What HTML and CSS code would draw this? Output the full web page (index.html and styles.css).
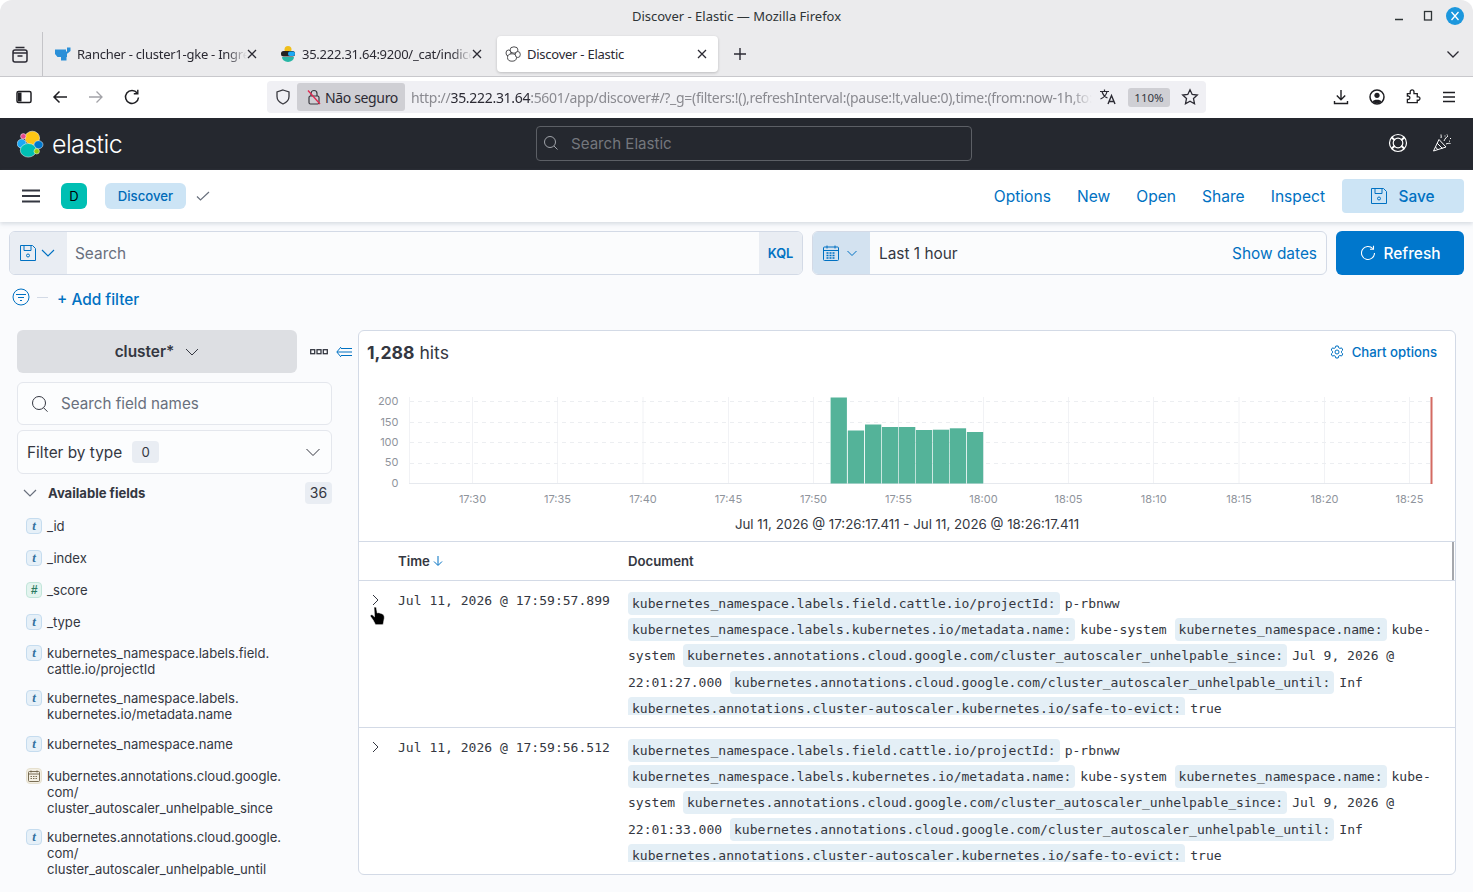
FILE: index.html
```html
<!DOCTYPE html>
<html lang="pt">
<head>
    <meta charset="UTF-8">
    <title>Discover - Elastic</title>
    <link rel="stylesheet" href="styles.css">
</head>
<body>
<div class="window">
    <!-- firefox chrome -->
    <div class="titlebar">
        <span class="title">Discover - Elastic — Mozilla Firefox</span>
        <div class="winctl">
            <svg class="win-min" width="12" height="12" viewBox="0 0 12 12"><path d="M2 9.500h8" stroke="#2e3436" stroke-width="1.400"/></svg>
            <svg width="12" height="12" viewBox="0 0 12 12"><rect x="2.500" y="1.500" width="7" height="8.500" fill="none" stroke="#2e3436" stroke-width="1.300"/></svg>
            <span class="close"><svg width="18" height="18" viewBox="0 0 18 18"><path d="M5.500 5l7 8M12.500 5l-7 8" stroke="#fff" stroke-width="1.300"/></svg></span>
        </div>
    </div>
    <div class="tabbar">
        <div class="tabview">
            <svg width="18" height="18" viewBox="0 0 18 18" fill="none" stroke="#2b2a33" stroke-width="1.500"><rect x="2" y="4" width="14" height="12" rx="2"/><path d="M4.500 1.500h9M6.500 10h5"/><path d="M2 7h14"/></svg>
        </div>
        <div class="tab">
            <svg class="fav" width="16" height="16" viewBox="0 0 16 16"><path d="M0 3.500h11v2h1v-4h3.500V5l-3 2.500H12V11h-.5v3.500H6V11H2.500L0 8z" fill="#2a8fd8"/></svg>
            <span class="tab-text">Rancher - cluster1-gke - Ingress</span>
            <svg class="tab-x" width="10" height="10" viewBox="0 0 10 10"><path d="M1 1l8 8M9 1l-8 8" stroke="#2b2a33" stroke-width="1.300"/></svg>
        </div>
        <div class="tab">
            <svg class="fav" width="16" height="16" viewBox="0 0 16 16"><circle cx="8" cy="3.500" r="3.500" fill="#f0bf1a"/><rect x="1" y="5" width="14" height="5.500" rx="2.500" fill="#222"/><rect x="8" y="5.500" width="7" height="4.500" rx="2" fill="#1ba9f5"/><path d="M2 11h12a6 5 0 0 1-12 0z" fill="#26b6a5"/></svg>
            <span class="tab-text">35.222.31.64:9200/_cat/indices</span>
            <svg class="tab-x" width="10" height="10" viewBox="0 0 10 10"><path d="M1 1l8 8M9 1l-8 8" stroke="#2b2a33" stroke-width="1.300"/></svg>
        </div>
        <div class="tab tab-active">
            <svg class="fav" width="16" height="16" viewBox="0 0 16 16" fill="#fff" stroke="#3c3c40" stroke-width=".9"><ellipse cx="9" cy="4" rx="4" ry="3.200"/><ellipse cx="3.500" cy="7" rx="2.500" ry="3"/><ellipse cx="7" cy="11.500" rx="4.500" ry="3.700"/><ellipse cx="12.800" cy="8.500" rx="2.500" ry="3"/></svg>
            <span class="tab-text">Discover - Elastic</span>
            <svg class="tab-x" width="10" height="10" viewBox="0 0 10 10"><path d="M1 1l8 8M9 1l-8 8" stroke="#2b2a33" stroke-width="1.300"/></svg>
        </div>
        <svg class="newtab" width="14" height="14" viewBox="0 0 14 14"><path d="M7 1v12M1 7h12" stroke="#2b2a33" stroke-width="1.400"/></svg>
        <svg class="alltabs" width="14" height="14" viewBox="0 0 14 14" fill="none"><path d="M1.500 4.500L7 10l5.500-5.500" stroke="#2b2a33" stroke-width="1.300"/></svg>
    </div>
    <div class="navbar">
        <div class="nav-left">
            <svg width="16" height="16" viewBox="0 0 16 16" fill="none" stroke="#1f1f23" stroke-width="1.500"><rect x="1" y="2.500" width="14" height="11" rx="1.500"/><rect x="2" y="3.500" width="3.500" height="9" fill="#1f1f23" stroke="none"/></svg>
            <svg width="16" height="16" viewBox="0 0 16 16" fill="none" stroke="#1f1f23" stroke-width="1.500"><path d="M15 8H2M7.500 2.500L2 8l5.500 5.500"/></svg>
            <svg width="16" height="16" viewBox="0 0 16 16" fill="none" stroke="#a3a3a8" stroke-width="1.300"><path d="M1 8h13M8.500 2.500L14 8l-5.500 5.500"/></svg>
            <svg width="16" height="16" viewBox="0 0 16 16" fill="none" stroke="#1f1f23" stroke-width="1.500"><path d="M13.200 4A6.500 6.500 0 1 0 14.500 8.500"/><path d="M13.800 .8v4h-4" stroke-width="1.400"/></svg>
        </div>
        <div class="urlbar">
            <svg class="shield" width="16" height="16" viewBox="0 0 16 16" fill="none" stroke="#3a3a40" stroke-width="1.300"><path d="M8 1l6 2v4.500c0 3.500-2.500 6-6 7.500-3.500-1.500-6-4-6-7.500V3z"/></svg>
            <span class="notsafe">
                <svg width="16" height="16" viewBox="0 0 16 16" fill="none" stroke="#3a3a40" stroke-width="1.200"><rect x="3" y="7" width="10" height="8" rx="1.500"/><path d="M5 7V4.500a3 3 0 0 1 6 0V7"/><path d="M2 1.500l12 13.500" stroke="#e22850" stroke-width="1.300"/></svg>
                Não seguro
            </span>
            <span class="url">http://<b>35.222.31.64</b>:5601/app/discover#/?_g=(filters:!(),refreshInterval:(pause:!t,value:0),time:(from:now-1h,to:now))</span>
            <svg class="translate" width="18" height="18" viewBox="0 0 18 18" fill="none" stroke="#2b2a33" stroke-width="1.200"><path d="M1 3.500h9M5.500 1.500v2M8 3.500c-.7 3.500-3 6-6.500 7.500M3 3.500c.8 3 3 5.500 5.500 6.500"/><path d="M9 16l3.500-8.500L16 16M10.200 13.500h4.600" stroke-width="1.400"/></svg>
            <span class="zoomchip">110%</span>
            <svg class="star" width="18" height="18" viewBox="0 0 18 18" fill="none" stroke="#2b2a33" stroke-width="1.300"><path d="M9 1.800l2.200 4.700 5.100.6-3.800 3.500 1 5.100L9 13.200l-4.500 2.500 1-5.100L1.700 7.100l5.100-.6z"/></svg>
        </div>
        <div class="nav-right">
            <svg width="16" height="16" viewBox="0 0 16 16" fill="none" stroke="#1f1f23" stroke-width="1.400"><path d="M8 1v9.500M3.800 6.500L8 10.700l4.200-4.200M1.500 12v2.500h13V12"/></svg>
            <svg width="16" height="16" viewBox="0 0 16 16"><circle cx="8" cy="8" r="7" fill="none" stroke="#1f1f23" stroke-width="1.500"/><circle cx="8" cy="6.300" r="2.600" fill="#1f1f23"/><path d="M3.500 12.500c1-2.500 8-2.500 9 0a6 6 0 0 1-9 0z" fill="#1f1f23"/></svg>
            <svg width="16" height="16" viewBox="0 0 16 16" fill="none" stroke="#1f1f23" stroke-width="1.400"><path d="M2 5.500h3V3.500a2 2 0 0 1 4 0v2h3.500V9h1.500a1.800 1.800 0 0 1 0 3.500h-1.500v2.500H2v-3.500h1.300a1.800 1.800 0 0 0 0-3.500H2z" transform="translate(.5 -.5) scale(.94)"/></svg>
            <svg width="16" height="16" viewBox="0 0 16 16" fill="none" stroke="#1f1f23" stroke-width="1.400"><path d="M2 3.500h12M2 8h12M2 12.500h12"/></svg>
        </div>
    </div>

    <!-- kibana -->
    <header class="k-header">
        <div class="k-logo">
            <svg width="28" height="28" viewBox="0 0 28 28" stroke="#fff" stroke-width=".5"><ellipse cx="15.300" cy="8" rx="7.300" ry="6.800" fill="#fec514"/><circle cx="6.300" cy="6.300" r="2.700" fill="#e8478b"/><circle cx="4.700" cy="13.700" r="4.500" fill="#1ba9f5"/><ellipse cx="21.500" cy="14.700" rx="4.500" ry="4" fill="#0077cc"/><ellipse cx="11.300" cy="20.300" rx="8" ry="6.800" fill="#00bfb3"/><circle cx="19.700" cy="21.300" r="2.700" fill="#93c90e"/></svg>
            <span class="k-word">elastic</span>
        </div>
        <div class="k-search">
            <svg width="16" height="16" viewBox="0 0 16 16" fill="none" stroke="#a0a3a9" stroke-width="1"><circle cx="7" cy="7" r="5.500"/><path d="M11 11l3.500 3.500"/></svg>
            <span>Search Elastic</span>
        </div>
        <div class="k-actions">
            <svg width="20" height="20" viewBox="0 0 20 20" fill="none" stroke="#fff" stroke-width="1.200"><circle cx="10" cy="10" r="8.500"/><circle cx="10" cy="10" r="4.800"/><path d="M3.800 4.500l3 2.800M16.200 4.500l-3 2.800M3.800 15.500l3-2.800M16.200 15.500l-3-2.800" stroke-width="2"/></svg>
            <svg width="20" height="20" viewBox="0 0 20 20" fill="none" stroke="#fff" stroke-width="1"><path d="M1.500 18L7 6.500l7 7.500z"/><path d="M5 10l5.500 5.500M3.500 14l2.500 3M9 5c.5-1.500 0-2.500 0-3.500M12 8c1-2.500 2.500-4 4-5M14 11c1.500-.7 3-.8 4.500-.5M15 1.500l.5 1M18 5.500h1M13 2.500v1M17 8l1 .3"/></svg>
        </div>
    </header>
    <div class="app-bar">
        <svg class="burger" width="18" height="14" viewBox="0 0 18 14"><path d="M0 1.500h18M0 7h18M0 12.500h18" stroke="#343741" stroke-width="2"/></svg>
        <span class="space-badge">D</span>
        <span class="crumb">Discover</span>
        <svg width="14" height="14" viewBox="0 0 14 14" fill="none"><path d="M1 7.500l3.500 3.500L13 3" stroke="#69707d" stroke-width="1.200"/></svg>
        <nav class="app-menu">
            <a>Options</a><a>New</a><a>Open</a><a>Share</a><a>Inspect</a>
            <span class="save-btn">
                <svg width="16" height="16" viewBox="0 0 16 16" fill="none" stroke="#0071c2" stroke-width="1"><path d="M.5 .5h12l3 3v12H.5z"/><path d="M4 .5v5h7v-5"/><circle cx="8" cy="10.500" r="1.500"/></svg>
                Save
            </span>
        </nav>
    </div>

    <div class="content">
        <div class="query-row">
            <div class="query-box">
                <span class="saved">
                    <svg width="16" height="16" viewBox="0 0 16 16" fill="none" stroke="#0071c2" stroke-width="1"><path d="M.5 .5h12l3 3v12H.5z"/><path d="M4 .5v5h7v-5"/><circle cx="8" cy="10.500" r="1.500"/></svg>
                    <svg width="14" height="14" viewBox="0 0 14 14" fill="none"><path d="M1 4l6 6 6-6" stroke="#0071c2" stroke-width="1.100"/></svg>
                </span>
                <span class="query-input">Search</span>
                <span class="kql">KQL</span>
            </div>
            <div class="date-box">
                <span class="cal">
                    <svg width="16" height="16" viewBox="0 0 16 16" fill="none" stroke="#0071c2" stroke-width="1"><rect x=".5" y="2" width="15" height="13.500" rx="1"/><path d="M.5 5.500h15M4 .5v3M12 .5v3"/><path d="M3.500 8h9M3.500 10.500h9M3.500 13h9" stroke-width="1.300" stroke-dasharray="2 1"/></svg>
                    <svg width="10" height="10" viewBox="0 0 10 10" fill="none"><path d="M.5 3L5 7.500 9.500 3" stroke="#0071c2"/></svg>
                </span>
                <span class="date-label">Last 1 hour</span>
                <a class="show-dates">Show dates</a>
            </div>
            <span class="refresh-btn">
                <svg width="16" height="16" viewBox="0 0 16 16" fill="none" stroke="#fff" stroke-width="1.100"><path d="M12.800 3.600A6.500 6.500 0 1 0 14.500 8"/><path d="M13.500 .8v3.500H10"/></svg>
                Refresh
            </span>
        </div>
        <div class="filter-row">
            <svg width="18" height="18" viewBox="0 0 18 18" fill="none" stroke="#0071c2" stroke-width="1"><circle cx="9" cy="9" r="8"/><path d="M4 6.500h10M6 9.500h6M8 12.500h2" stroke-width="1.200"/></svg>
            <span class="filter-dash"></span>
            <a class="add-filter">+ Add filter</a>
        </div>

        <div class="main">
            <aside class="sidebar">
                <div class="index-row">
                    <span class="index-btn">cluster*
                        <svg width="14" height="14" viewBox="0 0 14 14" fill="none"><path d="M1 4l6 6 6-6" stroke="#343741" stroke-width="1"/></svg>
                    </span>
                    <svg class="dots" width="18" height="6" viewBox="0 0 18 6" fill="none" stroke="#343741" stroke-width="1.300"><rect x=".7" y=".7" width="4" height="4"/><rect x="7" y=".7" width="4" height="4"/><rect x="13.300" y=".7" width="4" height="4"/></svg>
                    <svg class="collapse" width="16" height="12" viewBox="0 0 16 12" fill="none" stroke="#0071c2" stroke-width="1"><path d="M5 1L.8 6 5 11M1 6h15M5 2.500h11M5 9.500h11"/></svg>
                </div>
                <div class="field-search">
                    <svg width="18" height="18" viewBox="0 0 18 18" fill="none" stroke="#343741" stroke-width="1"><circle cx="8" cy="8" r="6.500"/><path d="M12.500 12.700l4 4"/></svg>
                    <span>Search field names</span>
                </div>
                <div class="field-filter">
                    <span>Filter by type</span>
                    <span class="count">0</span>
                    <svg width="14" height="14" viewBox="0 0 14 14" fill="none"><path d="M.5 4l6.500 6.500L13.500 4" stroke="#343741" stroke-width="1"/></svg>
                </div>
                <div class="avail">
                    <svg width="14" height="14" viewBox="0 0 14 14" fill="none"><path d="M1 4l6 6 6-6" stroke="#69707d" stroke-width="1.200"/></svg>
                    <span>Available fields</span>
                    <span class="avail-count">36</span>
                </div>
                <ul class="fields">
                    <li><i class="ftype">t</i><span>_id</span></li>
                    <li><i class="ftype">t</i><span>_index</span></li>
                    <li><i class="ftype ftype-num">#</i><span>_score</span></li>
                    <li><i class="ftype">t</i><span>_type</span></li>
                    <li class="multi"><i class="ftype">t</i><span>kubernetes_namespace.labels.field.<br>cattle.io/projectId</span></li>
                    <li class="multi"><i class="ftype">t</i><span>kubernetes_namespace.labels.<br>kubernetes.io/metadata.name</span></li>
                    <li><i class="ftype">t</i><span>kubernetes_namespace.name</span></li>
                    <li class="multi long"><i class="ftype ftype-date"><svg width="12" height="12" viewBox="0 0 12 12" fill="none" stroke="#6b5f45" stroke-width=".9"><rect x=".5" y="1.500" width="11" height="10" rx="1"/><path d="M.5 4h11M3 .5v2M9 .5v2"/><path d="M2.500 6.500h7M2.500 8.500h7" stroke-dasharray="1.500 1"/></svg></i><span>kubernetes.annotations.cloud.google.<br>com/<br>cluster_autoscaler_unhelpable_since</span></li>
                    <li class="multi long"><i class="ftype">t</i><span>kubernetes.annotations.cloud.google.<br>com/<br>cluster_autoscaler_unhelpable_until</span></li>
                </ul>
            </aside>

            <section class="panel">
                <div class="hits-row">
                    <span class="hits"><b>1,288</b> hits</span>
                    <a class="chart-opts">
                        <svg width="14" height="14" viewBox="0 0 14 14" fill="none" stroke="#0071c2" stroke-width="1"><path d="M5.800 1h2.400l.4 1.700 1.300.7 1.700-.5 1.200 2.100-1.300 1.200v1.500l1.300 1.200-1.200 2.100-1.700-.5-1.300.7L8.200 13H5.800l-.4-1.700-1.300-.7-1.700.5L1.200 9l1.300-1.200V6.300L1.200 5l1.200-2.100 1.700.5 1.300-.7z"/><circle cx="7" cy="7" r="2"/></svg>
                        Chart options
                    </a>
                </div>
                <svg class="chart" width="1096" height="120" viewBox="359 390 1096 120">
                    <g stroke="#f1f2f5" stroke-width="1">
                        <path d="M409.500 397v87M472.500 397v87M557.500 397v87M643 397v87M728.500 397v87M813.500 397v87M898.500 397v87M983.500 397v87M1068.500 397v87M1153.500 397v87M1239 397v87M1324.500 397v87M1409.500 397v87"/>
                    </g>
                    <g stroke="#eceef1" stroke-width="1" stroke-dasharray="4 4">
                        <path d="M410 401.500h1020M410 422.500h1020M410 442.500h1020M410 463.500h1020"/>
                    </g>
                    <path d="M409 483.500h1022" stroke="#e6e9ee"/>
                    <g fill="#54b399">
                        <rect x="830.600" y="397.500" width="16.300" height="86"/>
                        <rect x="847.800" y="430.500" width="16.300" height="53"/>
                        <rect x="865" y="424.500" width="16.300" height="59"/>
                        <rect x="882" y="427" width="16.300" height="56.500"/>
                        <rect x="899" y="427" width="16.300" height="56.500"/>
                        <rect x="915.900" y="430" width="16.300" height="53.500"/>
                        <rect x="932.900" y="429.700" width="16.300" height="53.800"/>
                        <rect x="949.800" y="428.300" width="16.300" height="55.200"/>
                        <rect x="966.900" y="432" width="16.300" height="51.500"/>
                    </g>
                    <rect x="1430.500" y="397" width="2" height="87" fill="#d36a62"/>
                    <g class="axis-y" text-anchor="end">
                        <text x="398.500" y="405">200</text><text x="398.500" y="426">150</text><text x="398.500" y="446">100</text><text x="398.500" y="466">50</text><text x="398.500" y="487">0</text>
                    </g>
                    <g class="axis-x" text-anchor="middle">
                        <text x="472.500" y="503">17:30</text><text x="557.500" y="503">17:35</text><text x="643" y="503">17:40</text><text x="728.500" y="503">17:45</text><text x="813.500" y="503">17:50</text><text x="898.500" y="503">17:55</text><text x="983.500" y="503">18:00</text><text x="1068.500" y="503">18:05</text><text x="1153.800" y="503">18:10</text><text x="1239" y="503">18:15</text><text x="1324.500" y="503">18:20</text><text x="1409.500" y="503">18:25</text>
                    </g>
                </svg>
                <div class="range">Jul 11, 2026 @ 17:26:17.411 - Jul 11, 2026 @ 18:26:17.411</div>
                <div class="t-head">
                    <span class="th-time">Time
                        <svg width="10" height="10" viewBox="0 0 10 10" fill="none"><path d="M5 0v9M1 5.500L5 9.500l4-4" stroke="#0071c2" stroke-width="1"/></svg>
                    </span>
                    <span class="th-doc">Document</span>
                    <span class="thumb"></span>
                </div>
                <div class="t-row">
                    <svg class="expand" width="8" height="12" viewBox="0 0 8 12" fill="none"><path d="M1 1l5 5-5 5" stroke="#343741" stroke-width="1"/></svg>
                    <svg class="hand" width="20" height="22" viewBox="0 0 20 22"><path d="M6 1.500c1-.8 2.200-.3 2.500 1l.8 4.500 1-.3 1.500.3 1.500.5 1.500.7c1.500.8 1.600 2.500 1.500 4l-.8 4.500-.5 2H7.500L5 14 2.500 10.500c-.8-1.200.8-2.300 2-1.500l2 1.800z" fill="#000" stroke="#fff" stroke-width=".6"/></svg>
                    <span class="t-time">Jul 11, 2026 @ 17:59:57.899</span>
                    <div class="doc">
                        <span class="k">kubernetes_namespace.labels.field.cattle.io/projectId:</span><span>p-rbnww</span>
                        <span class="k">kubernetes_namespace.labels.kubernetes.io/metadata.name:</span><span>kube-system</span>
                        <span class="k">kubernetes_namespace.name:</span><span>kube-system</span>
                        <span class="k">kubernetes.annotations.cloud.google.com/cluster_autoscaler_unhelpable_since:</span><span>Jul 9, 2026 @ 22:01:27.000</span>
                        <span class="k">kubernetes.annotations.cloud.google.com/cluster_autoscaler_unhelpable_until:</span><span>Inf</span>
                        <span class="k">kubernetes.annotations.cluster-autoscaler.kubernetes.io/safe-to-evict:</span><span>true</span>
                    </div>
                </div>
                <div class="t-row">
                    <svg class="expand" width="8" height="12" viewBox="0 0 8 12" fill="none"><path d="M1 1l5 5-5 5" stroke="#343741" stroke-width="1"/></svg>
                    <span class="t-time">Jul 11, 2026 @ 17:59:56.512</span>
                    <div class="doc">
                        <span class="k">kubernetes_namespace.labels.field.cattle.io/projectId:</span><span>p-rbnww</span>
                        <span class="k">kubernetes_namespace.labels.kubernetes.io/metadata.name:</span><span>kube-system</span>
                        <span class="k">kubernetes_namespace.name:</span><span>kube-system</span>
                        <span class="k">kubernetes.annotations.cloud.google.com/cluster_autoscaler_unhelpable_since:</span><span>Jul 9, 2026 @ 22:01:33.000</span>
                        <span class="k">kubernetes.annotations.cloud.google.com/cluster_autoscaler_unhelpable_until:</span><span>Inf</span>
                        <span class="k">kubernetes.annotations.cluster-autoscaler.kubernetes.io/safe-to-evict:</span><span>true</span>
                    </div>
                </div>
            </section>
        </div>
    </div>
</div>
</body>
</html>
```

FILE: styles.css
```css
* {
    margin: 0;
    padding: 0;
    box-sizing: border-box;
}

html, body {
    height: 100%;
    overflow: hidden;
    background: #fff;
}

.window {
    width: 1473px;
    height: 892px;
    overflow: hidden;
    display: flex;
    flex-direction: column;
    border-radius: 12px 12px 0 0;
    background: #ebebed;
    font-family: Inter, "Liberation Sans", sans-serif;
    color: #343741;
}

/* firefox chrome */
.titlebar {
    height: 32px;
    display: flex;
    align-items: center;
    justify-content: center;
    position: relative;
    font-family: "Noto Sans", sans-serif;
    font-size: 13px;
    color: #2e3436;
}

.winctl {
    position: absolute;
    right: 9px;
    top: 7px;
    display: flex;
    align-items: center;
    gap: 12px;
}

.win-min {
    margin-right: 5px;
}

.close {
    width: 18px;
    height: 18px;
    border-radius: 50%;
    background: #1c97dd;
    display: block;
}

.close svg {
    display: block;
}

.tabbar {
    height: 45px;
    display: flex;
    align-items: center;
    font-family: "Noto Sans", sans-serif;
    font-size: 13px;
    color: #2b2a33;
    border-bottom: 1px solid #c8c8cc;
}

.tabview {
    width: 43px;
    height: 100%;
    border-right: 1px solid #c4c4c8;
    display: flex;
    align-items: center;
    justify-content: center;
    padding: 2px 2px 0 0;
    margin-right: 4px;
}

.tab {
    width: 225px;
    height: 36px;
    display: flex;
    align-items: center;
    padding: 0 15px 0 8px;
    flex-shrink: 0;
}

.tab-active {
    width: 221px;
    padding-right: 11px;
    background: #fff;
    border-radius: 4px;
    box-shadow: 0 1px 3px rgba(0, 0, 0, .2);
}

.fav {
    flex-shrink: 0;
    margin-right: 6px;
}

.tab-text {
    flex: 1;
    overflow: hidden;
    white-space: nowrap;
    letter-spacing: -0.25px;
    -webkit-mask-image: linear-gradient(to right, #000 88%, transparent);
    mask-image: linear-gradient(to right, #000 88%, transparent);
}

.tab-active .tab-text {
    -webkit-mask-image: none;
    mask-image: none;
}

.tab-x {
    flex-shrink: 0;
}

.newtab {
    margin-left: 15px;
}

.alltabs {
    margin-left: auto;
    margin-right: 13px;
}

.navbar {
    height: 41px;
    padding-bottom: 1px;
    background: #fff;
    display: flex;
    align-items: center;
    font-family: "Noto Sans", sans-serif;
    font-size: 14px;
}

.nav-left {
    width: 267px;
    display: flex;
    align-items: center;
    gap: 20px;
    padding-left: 16px;
}

.urlbar {
    width: 939px;
    height: 32px;
    background: #f0f0f4;
    border-radius: 4px;
    display: flex;
    align-items: center;
    padding: 0 7px 0 8px;
}

.shield {
    flex-shrink: 0;
}

.notsafe {
    height: 28px;
    width: 108px;
    margin-left: 6px;
    background: #cfcfd4;
    border-radius: 3px;
    display: flex;
    align-items: center;
    gap: 3px;
    padding-left: 9px;
    color: #2b2a33;
    white-space: nowrap;
    flex-shrink: 0;
    letter-spacing: -0.35px;
}

.url {
    width: 681px;
    margin-left: 6px;
    overflow: hidden;
    white-space: nowrap;
    color: #8a8a90;
    letter-spacing: -0.3px;
    flex-shrink: 0;
    -webkit-mask-image: linear-gradient(to right, #000 97%, transparent);
    mask-image: linear-gradient(to right, #000 97%, transparent);
}

.url b {
    font-weight: 400;
    color: #2b2a33;
}

.translate {
    margin-left: 7px;
    flex-shrink: 0;
}

.zoomchip {
    width: 42px;
    height: 19px;
    margin-left: 11px;
    background: #cfcfd4;
    border-radius: 3px;
    font-size: 11.500px;
    text-align: center;
    line-height: 19px;
    flex-shrink: 0;
}

.star {
    margin-left: 11px;
    flex-shrink: 0;
}

.nav-right {
    flex: 1;
    display: flex;
    justify-content: flex-end;
    gap: 20px;
    padding-right: 16px;
}

/* kibana header */
.k-header {
    height: 52px;
    flex-shrink: 0;
    background: #25282f;
    display: flex;
    align-items: center;
    padding-left: 17px;
}

.k-logo {
    width: 519px;
    display: flex;
    align-items: center;
    gap: 7px;
}

.k-word {
    color: #fff;
    font-weight: 300;
    font-size: 25px;
    letter-spacing: -0.6px;
}

.k-search {
    width: 436px;
    height: 35px;
    margin-bottom: 2px;
    border: 1px solid #5c5f65;
    border-radius: 4px;
    display: flex;
    align-items: center;
    gap: 12px;
    padding-left: 6px;
    color: #74777d;
    font-size: 15.100px;
}

.k-actions {
    flex: 1;
    margin-bottom: 2px;
    display: flex;
    justify-content: flex-end;
    gap: 24px;
    padding-right: 21px;
}

/* app menu */
.app-bar {
    height: 52px;
    flex-shrink: 0;
    background: #fff;
    display: flex;
    align-items: center;
    padding: 0 9px 0 22px;
    box-shadow: 0 2px 4px rgba(152, 162, 179, .35);
    position: relative;
}

.burger {
    margin-right: 21px;
}

.space-badge {
    width: 26px;
    height: 26px;
    border-radius: 6px;
    background: #00bfb3;
    color: #000;
    font-size: 13px;
    line-height: 26px;
    text-align: center;
    margin-right: 18px;
}

.crumb {
    width: 81px;
    height: 26px;
    border-radius: 6px;
    background: #cce4f5;
    color: #006bb8;
    font-size: 13.200px;
    font-weight: 500;
    line-height: 26px;
    text-align: center;
    margin-right: 10px;
}

.app-menu {
    margin-left: auto;
    display: flex;
    align-items: center;
    gap: 26px;
    font-size: 15.600px;
    color: #0071c2;
}

.save-btn {
    width: 122px;
    height: 34px;
    margin-left: -9px;
    background: #cce4f5;
    border-radius: 4px;
    display: flex;
    align-items: center;
    justify-content: center;
    gap: 11px;
    font-size: 15.400px;
    font-weight: 500;
}

/* page */
.content {
    flex: 1;
    min-height: 0;
    background: #fafbfd;
    display: flex;
    flex-direction: column;
    padding: 9px 9px 0;
}

.query-row {
    height: 44px;
    flex-shrink: 0;
    display: flex;
    gap: 9px;
}

.query-box, .date-box {
    display: flex;
    align-items: stretch;
    border: 1px solid #d3dae6;
    border-radius: 6px;
    overflow: hidden;
    font-size: 15.400px;
    background: #fbfcfd;
}

.query-box {
    width: 794px;
}

.saved {
    width: 57px;
    background: #e9edf3;
    display: flex;
    align-items: center;
    gap: 5px;
    padding-left: 10px;
}

.query-input {
    flex: 1;
    color: #69707d;
    padding-left: 8px;
    line-height: 44px;
}

.kql {
    width: 43px;
    background: #e9edf3;
    color: #0071c2;
    font-size: 12.800px;
    font-weight: 600;
    text-align: center;
    line-height: 44px;
}

.date-box {
    width: 515px;
}

.cal {
    width: 57px;
    background: #d3e2f0;
    display: flex;
    align-items: center;
    gap: 8px;
    padding-left: 10px;
}

.date-label {
    padding-left: 9px;
    line-height: 44px;
}

.show-dates {
    margin-left: auto;
    padding-right: 9px;
    color: #0071c2;
    line-height: 44px;
}

.refresh-btn {
    width: 128px;
    background: #0077cc;
    border-radius: 6px;
    color: #fff;
    font-size: 15.400px;
    font-weight: 500;
    display: flex;
    align-items: center;
    justify-content: center;
    gap: 8px;
}

.filter-row {
    height: 55px;
    flex-shrink: 0;
    display: flex;
    align-items: center;
    padding: 0 0 6px 3px;
}

.filter-row svg {
    margin-top: -5px;
}

.filter-dash {
    width: 11px;
    height: 1px;
    background: #d3dae6;
    margin: -5px 9px 0 7px;
}

.add-filter {
    color: #0071c2;
    font-size: 15.400px;
    font-weight: 500;
}

.main {
    flex: 1;
    min-height: 0;
    display: flex;
}

/* sidebar */
.sidebar {
    width: 349px;
    flex-shrink: 0;
    padding-left: 8px;
}

.index-row {
    height: 43px;
    display: flex;
    align-items: center;
}

.index-btn {
    width: 280px;
    height: 43px;
    background: #dddfe3;
    border-radius: 6px;
    display: flex;
    align-items: center;
    justify-content: center;
    gap: 11px;
    font-size: 15.400px;
    font-weight: 600;
}

.dots {
    margin-left: 13px;
}

.collapse {
    margin-left: 8px;
}

.field-search, .field-filter {
    width: 315px;
    border: 1px solid #e4e7ed;
    border-radius: 6px;
    background: #fcfdfe;
    display: flex;
    align-items: center;
    font-size: 15.400px;
}

.field-search {
    height: 43px;
    margin-top: 9px;
    padding-left: 13px;
    gap: 12px;
    font-size: 15.200px;
    color: #69707d;
}

.field-filter {
    height: 44px;
    margin-top: 5px;
    padding: 0 11px 0 9px;
}

.count {
    width: 27px;
    height: 22px;
    margin-left: 10px;
    background: #e9edf3;
    border-radius: 4px;
    text-align: center;
    line-height: 22px;
    font-size: 13.200px;
}

.field-filter svg {
    margin-left: auto;
}

.avail {
    width: 315px;
    height: 36px;
    display: flex;
    align-items: center;
    padding: 2px 0 0 6px;
    font-size: 13.100px;
    font-weight: 700;
}

.avail svg {
    margin-right: 11px;
}

.avail-count {
    width: 27px;
    height: 22px;
    margin-left: auto;
    background: #e9edf3;
    border-radius: 4px;
    text-align: center;
    line-height: 22px;
    font-weight: 400;
    font-size: 14px;
}

.fields {
    list-style: none;
    font-size: 13.100px;
    line-height: 16px;
}

.fields li {
    min-height: 32px;
    display: flex;
    align-items: center;
    padding-left: 9px;
}

.fields li.multi {
    align-items: flex-start;
    padding-top: 6.500px;
    padding-bottom: 6.500px;
}

.fields li.long {
    padding-top: 7.500px;
    padding-bottom: 6px;
}

.ftype {
    width: 16px;
    height: 16px;
    margin-right: 5px;
    flex-shrink: 0;
    border: 1px solid #c5dcef;
    border-radius: 4px;
    background: #e6f0f8;
    color: #33709f;
    font: italic 700 13px/14px "Liberation Serif", serif;
    text-align: center;
}

.ftype-num {
    border-color: #c2e5da;
    background: #e3f4ef;
    color: #2b7a62;
    font: italic 700 12px/14px "Liberation Sans", sans-serif;
}

.ftype-date {
    border-color: #e6e0cf;
    background: #f3efe3;
    display: flex;
    align-items: center;
    justify-content: center;
}

/* results */
.panel {
    flex: 1;
    height: 545px;
    background: #fff;
    border: 1px solid #d3dae6;
    border-radius: 6px;
    overflow: hidden;
    margin-right: 8px;
}

.hits-row {
    height: 59px;
    display: flex;
    justify-content: space-between;
    padding: 11px 18px 0 8px;
}

.hits {
    font-size: 17.600px;
    line-height: 22px;
}

.chart-opts {
    display: flex;
    align-items: center;
    height: 22px;
    margin-top: -1px;
    gap: 8px;
    color: #0071c2;
    font-size: 13.200px;
    font-weight: 500;
}

.chart {
    display: block;
}

.axis-y text, .axis-x text {
    fill: #8f949c;
    font-size: 11px;
    font-family: Inter, sans-serif;
}

.range {
    height: 32px;
    padding-top: 6px;
    font-size: 13.300px;
    line-height: 16px;
    text-align: center;
    border-bottom: 1px solid #d3dae6;
}

.t-head {
    height: 39px;
    display: flex;
    align-items: center;
    font-size: 13.200px;
    font-weight: 600;
    border-bottom: 1px solid #d3dae6;
}

.th-time {
    width: 269px;
    padding-left: 39px;
}

.th-doc {
    flex: 1;
}

.thumb {
    width: 2px;
    height: 100%;
    margin-right: 1px;
    background: #a6a8ad;
}

.t-row {
    height: 147px;
    display: flex;
    position: relative;
    border-bottom: 1px solid #d3dae6;
}

.expand {
    flex-shrink: 0;
    margin: 13px 0 0 13px;
}

.hand {
    position: absolute;
    left: 9px;
    top: 25px;
}

.t-time {
    width: 230px;
    flex-shrink: 0;
    margin: 12px 0 0 18px;
    font: 13.040px/16px "DejaVu Sans Mono", monospace;
}

.doc {
    flex: 1;
    max-height: 124px;
    margin-top: 10px;
    padding-right: 18px;
    overflow: hidden;
    font: 13.040px/26.200px "DejaVu Sans Mono", monospace;
}

.k {
    background: #e4eff6;
    border-radius: 4px;
    padding: 4px;
    margin-right: 5px;
    white-space: nowrap;
}
```
